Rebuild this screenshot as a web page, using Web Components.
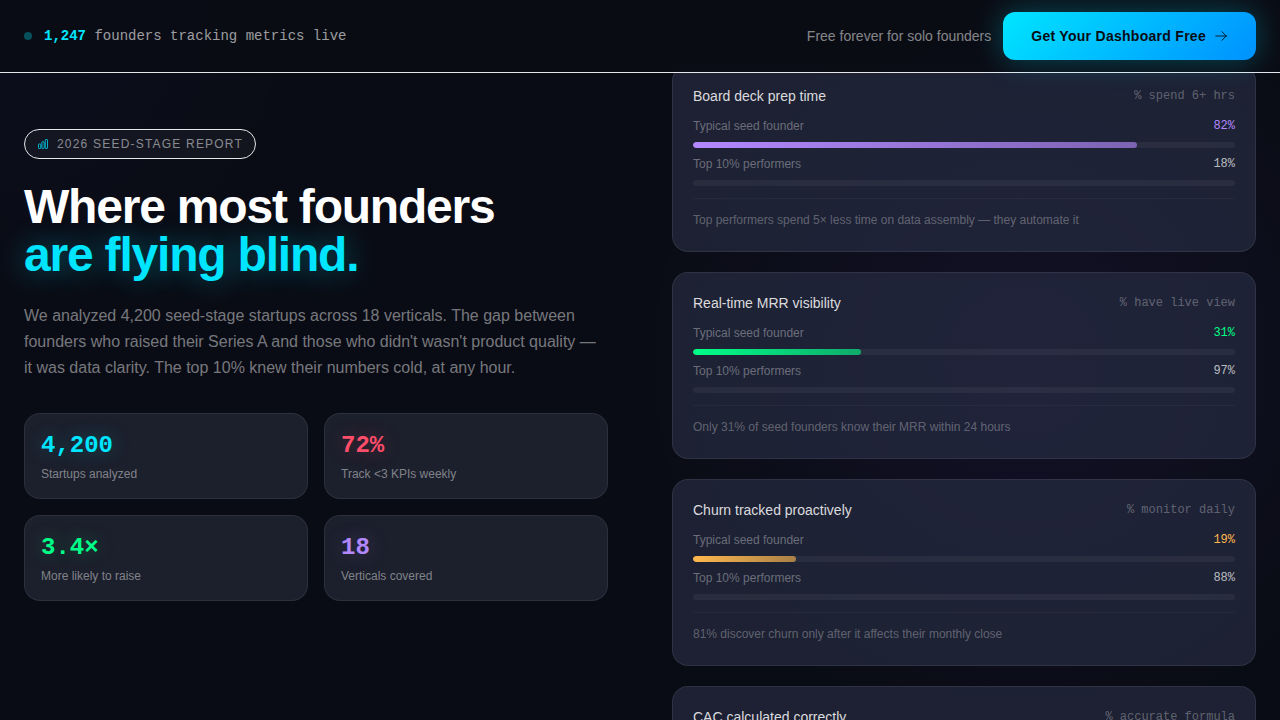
<!DOCTYPE html>
<html lang="en">
<head>
<meta charset="utf-8">
<title>2026 Seed-Stage Report</title>
<style>
  html { scrollbar-width: none; background: #0a0c15; }
  body {
    margin: 0;
    min-height: 100vh;
    font-family: "Liberation Sans", Arial, sans-serif;
    color: #fff;
    --mono: "Liberation Mono", "Courier New", monospace;
    --cyan: #00e5ff;
    --green: #00ff88;
    --red: #ff4d6a;
    --purple: #b388ff;
    --amber: #ffb84d;
    --line: rgba(255, 255, 255, 0.08);
    background:
      radial-gradient(circle at 80% 50%, rgba(124, 77, 255, 0.08), transparent 380px) fixed,
      radial-gradient(circle at 0% 0%, rgba(60, 60, 255, 0.04), transparent 300px) fixed,
      #0a0c15;
  }
</style>
</head>
<body>
<report-page>
  <live-bar slot="bar" count="1,247" action="Get Your Dashboard Free">
    founders tracking metrics live
    <span slot="note">Free forever for solo founders</span>
  </live-bar>
  <report-hero slot="intro">
    <span slot="badge">2026 Seed-Stage Report</span>
    <span slot="title">Where most founders</span>
    <span slot="accent">are flying blind.</span>
    <span slot="lead">We analyzed 4,200 seed-stage startups across 18 verticals. The gap between founders who raised their Series A and those who didn't wasn't product quality — it was data clarity. The top 10% knew their numbers cold, at any hour.</span>
    <stat-tile value="4,200" tone="cyan">Startups analyzed</stat-tile>
    <stat-tile value="72%" tone="red">Track &lt;3 KPIs weekly</stat-tile>
    <stat-tile value="3.4×" tone="green">More likely to raise</stat-tile>
    <stat-tile value="18" tone="purple">Verticals covered</stat-tile>
  </report-hero>
  <metric-card heading="Board deck prep time" unit="% spend 6+ hrs" typical="82" top="18" tone="purple">Top performers spend 5× less time on data assembly — they automate it</metric-card>
  <metric-card heading="Real-time MRR visibility" unit="% have live view" typical="31" top="97" tone="green">Only 31% of seed founders know their MRR within 24 hours</metric-card>
  <metric-card heading="Churn tracked proactively" unit="% monitor daily" typical="19" top="88" tone="amber">81% discover churn only after it affects their monthly close</metric-card>
  <metric-card heading="CAC calculated correctly" unit="% accurate formula" tone="cyan" typical="24" top="91">Most founders leave salaries out of acquisition cost</metric-card>
</report-page>

<script>
class BaseElement extends HTMLElement {
  connectedCallback() {
    if (this.shadowRoot) return;
    this.attachShadow({ mode: "open" }).innerHTML = this.render();
  }
}

customElements.define("report-page", class extends BaseElement {
  render() {
    return `
    <style>
      :host { display: block; }
      ::slotted(live-bar) { position: sticky; top: 0; z-index: 2; }
      main {
        display: grid;
        grid-template-columns: minmax(0, 1fr) minmax(0, 1fr);
        gap: 64px;
        padding: 0 24px 64px;
      }
      .intro { padding-top: 56px; }
      .cards {
        display: flex; flex-direction: column; gap: 20px;
        margin-top: -8px;
      }
    </style>
    <slot name="bar"></slot>
    <main>
      <div class="intro"><slot name="intro"></slot></div>
      <div class="cards"><slot></slot></div>
    </main>`;
  }
});

customElements.define("live-bar", class extends BaseElement {
  render() {
    return `
    <style>
      :host { display: block; }
      header {
        display: flex; align-items: center; justify-content: space-between;
        height: 72px; padding: 0 24px;
        border-bottom: 1px solid #e5e7eb;
        background: rgba(10, 12, 21, 0.96);
      }
      .live, .side { display: flex; align-items: center; }
      .live { gap: 12px; font: 14px/20px var(--mono); color: rgba(255, 255, 255, 0.6); }
      .dot { width: 8px; height: 8px; border-radius: 50%; background: #05505a; }
      b { color: var(--cyan); }
      .side { gap: 12px; font-size: 14px; line-height: 20px; color: rgba(255, 255, 255, 0.5); }
      button {
        display: flex; align-items: center; gap: 8px;
        height: 48px; padding: 0 28px;
        border: 0; border-radius: 12px;
        font: bold 14px/20px "Liberation Sans", Arial, sans-serif;
        letter-spacing: 0.02em;
        color: #0a0c15;
        background: linear-gradient(135deg, #00e5ff, #0091ff);
        box-shadow: 0 0 30px rgba(0, 229, 255, 0.3);
      }
    </style>
    <header>
      <div class="live"><span class="dot"></span><span><b>${this.getAttribute("count")}</b> <slot></slot></span></div>
      <div class="side">
        <slot name="note"></slot>
        <button type="button">${this.getAttribute("action")}
          <svg width="14" height="14" viewBox="0 0 24 24" fill="none" stroke="currentColor" stroke-width="1.5" stroke-linecap="round" stroke-linejoin="round" aria-hidden="true"><path d="M13.5 4.5 21 12m0 0-7.5 7.5M21 12H3"/></svg>
        </button>
      </div>
    </header>`;
  }
});

customElements.define("report-hero", class extends BaseElement {
  render() {
    return `
    <style>
      :host { display: block; }
      .badge {
        display: inline-flex; align-items: center; gap: 8px;
        box-sizing: border-box; height: 30px; padding: 0 12px;
        border: 1px solid #e5e7eb; border-radius: 15px;
        background: rgba(255, 255, 255, 0.04);
        font-size: 12px; line-height: 16px; letter-spacing: 0.1em;
        text-transform: uppercase; color: rgba(255, 255, 255, 0.5);
      }
      .badge svg { color: var(--cyan); }
      h1 {
        margin: 24px 0; font-size: 48px; line-height: 48px;
        font-weight: bold; letter-spacing: -0.025em;
      }
      h1 span { display: block; }
      .accent { color: var(--cyan); text-shadow: 0 0 30px rgba(0, 229, 255, 0.4); }
      p { margin: 0 0 32px; font-size: 16px; line-height: 26px; color: rgba(255, 255, 255, 0.45); }
      .tiles { display: grid; grid-template-columns: 1fr 1fr; gap: 16px; }
    </style>
    <div class="badge">
      <svg width="12" height="12" viewBox="0 0 24 24" fill="none" stroke="currentColor" stroke-width="1.5" stroke-linejoin="round" aria-hidden="true">
        <path d="M3 13.125C3 12.504 3.504 12 4.125 12h2.25c.621 0 1.125.504 1.125 1.125v6.75C7.5 20.496 6.996 21 6.375 21h-2.250A1.125 1.125 0 0 1 3 19.875v-6.750ZM9.750 8.625c0-.621.504-1.125 1.125-1.125h2.250c.621 0 1.125.504 1.125 1.125v11.250c0 .621-.504 1.125-1.125 1.125h-2.250a1.125 1.125 0 0 1-1.125-1.125V8.625ZM16.500 4.125c0-.621.504-1.125 1.125-1.125h2.250C20.496 3 21 3.504 21 4.125v15.750c0 .621-.504 1.125-1.125 1.125h-2.250a1.125 1.125 0 0 1-1.125-1.125V4.125Z"/>
      </svg>
      <slot name="badge"></slot>
    </div>
    <h1><span><slot name="title"></slot></span><span class="accent"><slot name="accent"></slot></span></h1>
    <p><slot name="lead"></slot></p>
    <div class="tiles"><slot></slot></div>`;
  }
});

customElements.define("stat-tile", class extends BaseElement {
  render() {
    return `
    <style>
      :host {
        display: block; box-sizing: border-box; padding: 16px;
        border: 1px solid var(--line); border-radius: 16px;
        background: #1c1f2c;
        --tone: var(--${this.getAttribute("tone")});
      }
      strong {
        display: block; font: bold 24px/32px var(--mono); color: var(--tone);
        text-shadow: 0 0 20px color-mix(in srgb, var(--tone) 30%, transparent);
      }
      .label { margin-top: 4px; font-size: 12px; line-height: 16px; color: rgba(255, 255, 255, 0.45); }
    </style>
    <strong>${this.getAttribute("value")}</strong>
    <div class="label"><slot></slot></div>`;
  }
});

customElements.define("metric-card", class extends BaseElement {
  row(label, value, cls) {
    return `
      <div class="row ${cls}"><span>${label}</span><span class="value">${value}%</span></div>
      <div class="track"><div class="fill ${cls}"></div></div>`;
  }
  render() {
    const at = name => this.getAttribute(name);
    return `
    <style>
      :host {
        display: block; box-sizing: border-box; padding: 20px;
        border: 1px solid var(--line); border-radius: 16px;
        background: rgba(42, 48, 72, 0.6);
        --tone: var(--${at("tone")});
      }
      .head, .row { display: flex; align-items: center; justify-content: space-between; }
      .head { margin-bottom: 12px; }
      h2 { margin: 0; font-size: 14px; line-height: 20px; font-weight: normal; color: rgba(255, 255, 255, 0.85); }
      .unit { font: 12px/16px var(--mono); color: rgba(255, 255, 255, 0.3); }
      .row { font-size: 12px; line-height: 16px; color: rgba(255, 255, 255, 0.35); }
      .value { font: 12px/16px var(--mono); color: rgba(255, 255, 255, 0.7); }
      .typical .value { color: var(--tone); }
      .track {
        height: 6px; margin: 8px 0; border-radius: 3px; overflow: hidden;
        background: rgba(255, 255, 255, 0.05);
      }
      .fill { height: 100%; width: 0; border-radius: 3px; }
      .fill.typical {
        width: ${at("typical")}%;
        background: linear-gradient(90deg, var(--tone), color-mix(in srgb, var(--tone) 60%, transparent));
      }
      footer {
        margin-top: 12px; padding: 13px 0 3px;
        border-top: 1px solid rgba(255, 255, 255, 0.04);
        font-size: 12px; line-height: 16px; color: rgba(255, 255, 255, 0.3);
      }
    </style>
    <div class="head"><h2>${at("heading")}</h2><span class="unit">${at("unit")}</span></div>
    ${this.row("Typical seed founder", at("typical"), "typical")}
    ${this.row("Top 10% performers", at("top"), "top")}
    <footer><slot></slot></footer>`;
  }
});
</script>
</body>
</html>
